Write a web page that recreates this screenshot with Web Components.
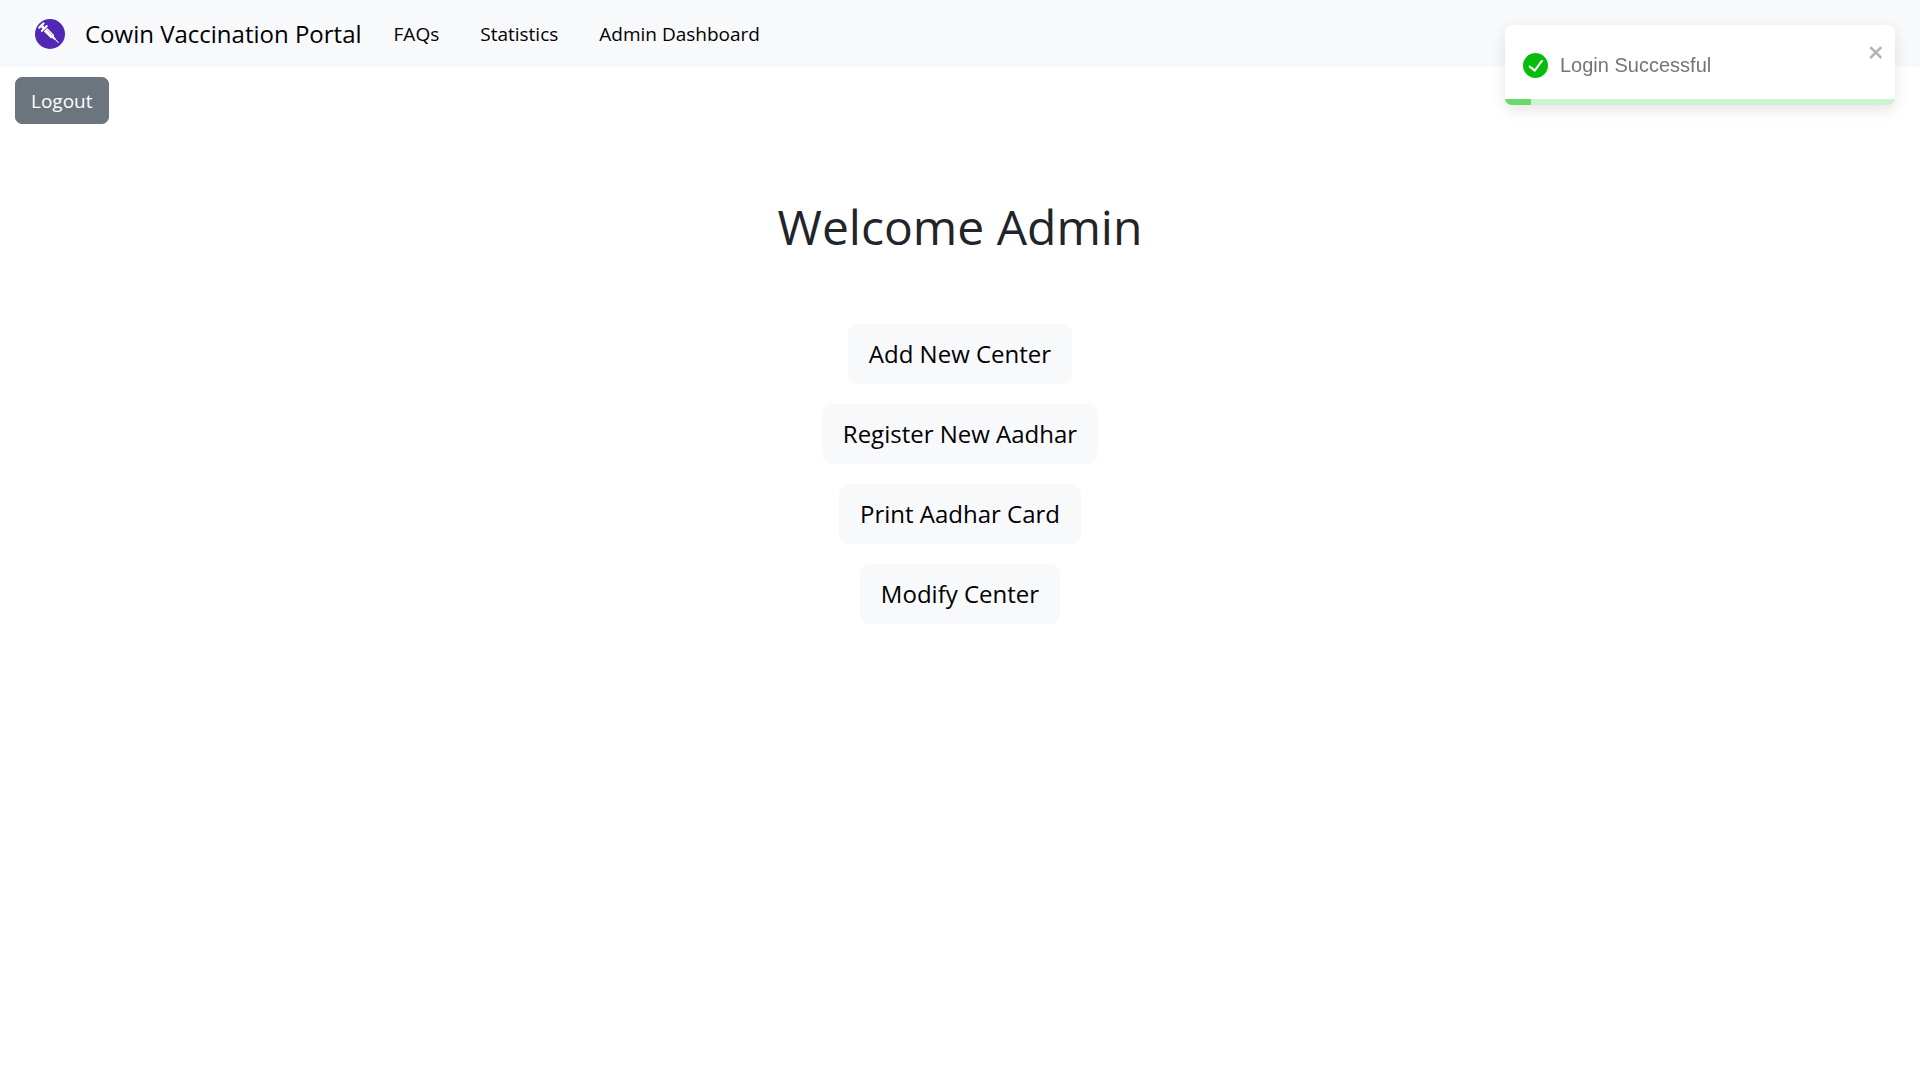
<!DOCTYPE html>
<html lang="en">
<head>
<meta charset="utf-8">
<meta name="viewport" content="width=device-width, initial-scale=1">
<title>Cowin Vaccination Portal</title>
<style>
  body { margin: 0; background: #fff; color: #212529; font-family: "Segoe UI", "Open Sans", sans-serif; font-size: 19px; line-height: 29px; }
</style>
</head>
<body>
<portal-app></portal-app>
<script>
const define = (name, html) => {
  const template = document.createElement('template');
  template.innerHTML = '<style>*{box-sizing:border-box}button{font:inherit;cursor:pointer}</style>' + html;
  customElements.define(name, class extends HTMLElement {
    constructor() {
      super();
      this.attachShadow({ mode: 'open' }).append(template.content.cloneNode(true));
    }
  });
};

define('portal-logo', `
  <style>:host{display:block;width:30px;height:30px} svg{display:block}</style>
  <svg width="30" height="30" viewBox="0 0 30 30" aria-hidden="true">
    <circle cx="15" cy="15" r="15" fill="#5127b3"/>
    <g transform="translate(5.6 5.8) rotate(45)" fill="#fff">
      <rect x="0" y="-4" width="2.2" height="8" rx=".8"/>
      <rect x="2" y="-1.3" width="3" height="2.6"/>
      <rect x="4.2" y="-4.4" width="2" height="8.8" rx=".8"/>
      <path d="M7-2.3h9.4l1.6 1.3h2.4v.5h5v1h-5V1H18l-1.6 1.3H7z"/>
      <path d="M9-.8h6.5" stroke="#a997d8" stroke-width=".7"/>
    </g>
  </svg>`);

define('nav-link', `
  <style>:host{display:block} a{display:block;padding:11px 10px 9px;color:#000;text-decoration:none}</style>
  <a href="#"><slot></slot></a>`);

define('portal-navbar', `
  <style>
    :host{display:block;background:#f8f9fb}
    nav{display:flex;align-items:center;min-height:67px;padding:0 35px}
    .brand{display:flex;align-items:center;gap:20px;color:#000;text-decoration:none;font-size:24px;line-height:36px}
    .links{display:flex;gap:21px;margin-left:22px}
  </style>
  <nav aria-label="Main">
    <a class="brand" href="#"><portal-logo></portal-logo><slot name="brand"></slot></a>
    <div class="links"><slot></slot></div>
  </nav>`);

define('logout-button', `
  <style>:host{display:inline-block} button{display:block;padding:9px 15px 7px;border:1px solid #6c757d;border-radius:7px;background:#6c757d;color:#fff}</style>
  <button type="button"><slot></slot></button>`);

define('action-button', `
  <style>:host{display:block} button{display:block;padding:10px 20px;border:1px solid #f8f9fb;border-radius:10px;background:#f8f9fb;color:#000;font-size:24px;line-height:38px}</style>
  <button type="button"><slot></slot></button>`);

define('admin-dashboard', `
  <style>
    :host{display:block}
    .bar{display:flex;padding:10px 15px}
    main{display:flex;flex-direction:column;align-items:center;padding:63px 15px 20px}
    h1{margin:0 0 67px;font-size:48px;line-height:60px;font-weight:400}
    .actions{display:flex;flex-direction:column;align-items:center;gap:20px}
  </style>
  <div class="bar"><logout-button>Logout</logout-button></div>
  <main><h1><slot name="title"></slot></h1><div class="actions"><slot></slot></div></main>`);

define('toast-message', `
  <style>
    :host{position:fixed;top:25px;right:25px;width:390px;display:flex;flex-direction:column;overflow:hidden;border-radius:7px;background:#fff;color:#757575;font-family:"Liberation Sans",Arial,sans-serif;font-size:20px;box-shadow:0 5px 15px rgba(0,0,0,.1)}
    .body{display:flex;align-items:flex-start;min-height:74px;padding:20px 12px 14px 18px}
    .message{flex:1;display:flex;align-items:center;gap:12px;min-height:40px}
    svg{display:block}
    button{padding:0;border:0;background:none;color:#b3b3b3}
    .track{height:6px;background:#cef3cf}
    .fill{width:26px;height:6px;background:#6ad96d}
  </style>
  <div class="body" role="alert">
    <div class="message">
      <svg width="25" height="25" viewBox="0 0 24 24" fill="#07bc0c" aria-hidden="true"><path d="M12 0a12 12 0 1012 12A12.014 12.014 0 0012 0zm6.927 8.2l-6.845 9.289a1.011 1.011 0 01-1.43.188l-4.888-3.908a1 1 0 111.25-1.562l4.076 3.261 6.227-8.451a1 1 0 111.61 1.183z"/></svg>
      <span><slot></slot></span>
    </div>
    <button type="button" aria-label="close"><svg width="14" height="16" viewBox="0 0 14 16" fill="currentColor"><path fill-rule="evenodd" d="M7.71 8.23l3.75 3.75-1.48 1.48-3.75-3.75-3.75 3.75L1 11.98l3.75-3.75L1 4.48 2.48 3l3.75 3.75L9.98 3l1.48 1.48-3.75 3.75z" transform="translate(-.8 -2.5) scale(1.22)"/></svg></button>
  </div>
  <div class="track"><div class="fill"></div></div>`);

define('portal-app', `
  <style>:host{display:block}</style>
  <portal-navbar>
    <span slot="brand">Cowin Vaccination Portal</span>
    <nav-link>FAQs</nav-link>
    <nav-link>Statistics</nav-link>
    <nav-link>Admin Dashboard</nav-link>
  </portal-navbar>
  <admin-dashboard>
    <span slot="title">Welcome Admin</span>
    <action-button>Add New Center</action-button>
    <action-button>Register New Aadhar</action-button>
    <action-button>Print Aadhar Card</action-button>
    <action-button>Modify Center</action-button>
  </admin-dashboard>
  <toast-message>Login Successful</toast-message>`);
</script>
</body>
</html>
